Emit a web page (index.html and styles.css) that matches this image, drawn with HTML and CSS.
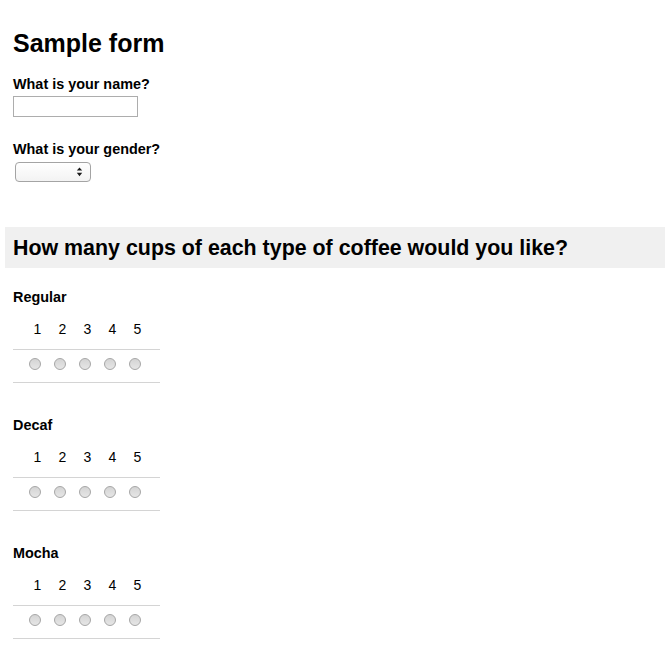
FILE: index.html
```html
<!DOCTYPE html>
<html>
<head>
<meta charset="utf-8">
<title>Sample form</title>
<link rel="stylesheet" href="styles.css">
</head>
<body>
<div class="page">
  <h1 class="title">Sample form</h1>
  <div class="field">
    <label class="label" for="name">What is your name?</label>
    <input class="text-input" id="name" type="text">
  </div>
  <div class="field field-gender">
    <label class="label" for="gender">What is your gender?</label>
    <span class="select-wrap">
      <select class="select" id="gender"><option></option><option>Male</option><option>Female</option></select>
      <svg class="select-arrows" width="7" height="10" viewBox="0 0 7 10"><path d="M0.8 3.6 L3.5 0.4 L6.2 3.6 Z M0.8 5.8 L3.5 9.2 L6.2 5.8 Z" fill="#1a1a1a"/></svg>
    </span>
  </div>

  <h2 class="band">How many cups of each type of coffee would you like?</h2>

  <div class="rating">
    <div class="rating-label">Regular</div>
    <div class="grid head-row"><span></span><span class="num">1</span><span class="num">2</span><span class="num">3</span><span class="num">4</span><span class="num">5</span><span></span></div>
    <div class="grid radio-row"><span></span><span class="cell"><input type="radio" name="regular" class="radio"></span><span class="cell"><input type="radio" name="regular" class="radio"></span><span class="cell"><input type="radio" name="regular" class="radio"></span><span class="cell"><input type="radio" name="regular" class="radio"></span><span class="cell"><input type="radio" name="regular" class="radio"></span><span></span></div>
  </div>

  <div class="rating">
    <div class="rating-label">Decaf</div>
    <div class="grid head-row"><span></span><span class="num">1</span><span class="num">2</span><span class="num">3</span><span class="num">4</span><span class="num">5</span><span></span></div>
    <div class="grid radio-row"><span></span><span class="cell"><input type="radio" name="decaf" class="radio"></span><span class="cell"><input type="radio" name="decaf" class="radio"></span><span class="cell"><input type="radio" name="decaf" class="radio"></span><span class="cell"><input type="radio" name="decaf" class="radio"></span><span class="cell"><input type="radio" name="decaf" class="radio"></span><span></span></div>
  </div>

  <div class="rating">
    <div class="rating-label">Mocha</div>
    <div class="grid head-row"><span></span><span class="num">1</span><span class="num">2</span><span class="num">3</span><span class="num">4</span><span class="num">5</span><span></span></div>
    <div class="grid radio-row"><span></span><span class="cell"><input type="radio" name="mocha" class="radio"></span><span class="cell"><input type="radio" name="mocha" class="radio"></span><span class="cell"><input type="radio" name="mocha" class="radio"></span><span class="cell"><input type="radio" name="mocha" class="radio"></span><span class="cell"><input type="radio" name="mocha" class="radio"></span><span></span></div>
  </div>
</div>
</body>
</html>
```

FILE: styles.css
```css
* { box-sizing: border-box; }
html, body { margin: 0; padding: 0; background: #fff; }
body {
  font-family: "Liberation Sans", Arial, Helvetica, sans-serif;
  color: #000;
}
.page {
  padding: 28px 5px 0 5px;
}
.title {
  margin: 0 0 18px 8px;
  font-size: 25px;
  line-height: 30px;
  font-weight: bold;
}
.field {
  padding-left: 8px;
  display: flex;
  flex-direction: column;
  align-items: flex-start;
}
.label {
  font-size: 14.4px;
  line-height: 17px;
  font-weight: bold;
}
.text-input {
  margin: 3px 0 0 0;
  width: 125px;
  height: 21px;
  border: 1px solid #adadad;
  padding: 0 3px;
  font: 13px "Liberation Sans", Arial, sans-serif;
  background: #fff;
  outline: none;
}
.field-gender { margin-top: 24px; }
.select-wrap {
  position: relative;
  display: block;
  margin: 4px 0 0 2px;
  width: 76px;
  height: 20px;
}
.select {
  appearance: none;
  -webkit-appearance: none;
  display: block;
  width: 76px;
  height: 20px;
  margin: 0;
  padding: 0 4px;
  border: 1px solid #a4a4a4;
  border-radius: 4px;
  background: linear-gradient(#ffffff, #f3f3f3);
  font: 12px "Liberation Sans", Arial, sans-serif;
  outline: none;
}
.select-arrows {
  position: absolute;
  left: 61px;
  top: 5px;
  pointer-events: none;
}
.band {
  margin: 45px 0 0 0;
  background: #f0f0f0;
  padding: 9px 8px 7px 8px;
  font-size: 21.4px;
  line-height: 25px;
  font-weight: bold;
}
.rating {
  padding-left: 8px;
  margin-bottom: 34px;
}
.band + .rating { margin-top: 21px; }
.rating-label {
  font-size: 14.4px;
  line-height: 16px;
  font-weight: bold;
}
.grid {
  display: grid;
  width: 147px;
  grid-template-columns: 9.5px repeat(5, 25px) 1fr;
  border-bottom: 1px solid #d4d4d4;
}
.head-row {
  padding: 16px 0 12px 0;
}
.num {
  font-size: 14px;
  line-height: 16px;
  text-align: center;
  padding-left: 5px;
}
.radio-row {
  padding: 8px 0 12px 0;
}
.cell {
  display: flex;
  justify-content: center;
}
.radio {
  appearance: none;
  -webkit-appearance: none;
  margin: 0;
  width: 12px;
  height: 12px;
  border-radius: 50%;
  border: 1px solid #a6a6a6;
  background: linear-gradient(#d4d4d4, #e6e6e6);
  display: block;
}
```
